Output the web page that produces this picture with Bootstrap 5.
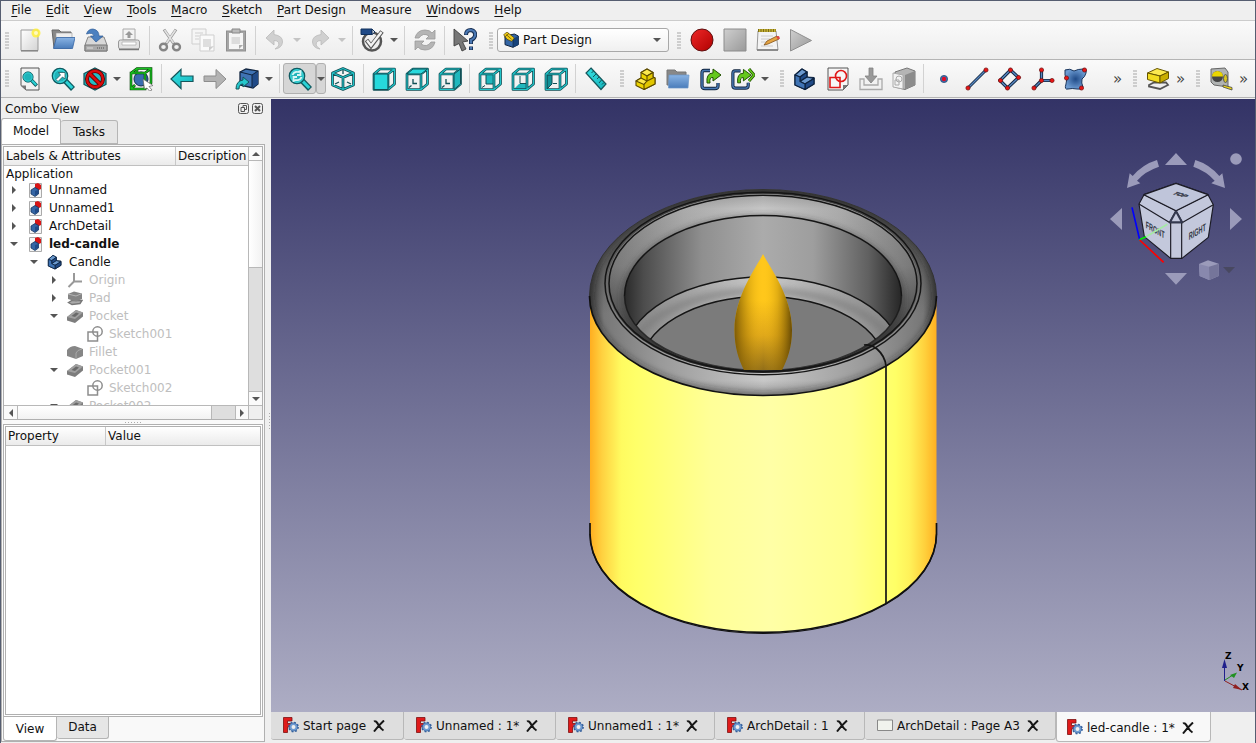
<!DOCTYPE html>
<html lang="en">
<head>
<meta charset="utf-8">
<title>FreeCAD</title>
<meta name="viewport" content="width=device-width, initial-scale=1">
<link href="https://cdn.jsdelivr.net/npm/bootstrap@5.3.0/dist/css/bootstrap.min.css" rel="stylesheet">
<script src="https://cdn.jsdelivr.net/npm/bootstrap@5.3.0/dist/js/bootstrap.bundle.min.js"></script>
<style>
body{font:12px/18px "DejaVu Sans",sans-serif;color:#111;background:#efefef;overflow:hidden}
.win{width:1256px;height:743px;border:1px solid #555d70;border-bottom:0;background:#efefef}
.menu{height:20px;border-bottom:1px solid #ccc;padding-left:3px}
.menu span{padding:0 7.3px;line-height:19px}
.menu u{text-underline-offset:2px;text-decoration-thickness:1px}
.bar{background:linear-gradient(#fafafa,#ededed);border-bottom:1px solid #b4b4b4}
.bar1{height:39px}.bar2{height:38px;margin-bottom:1px}
.tb{width:33px;flex:none;display:flex;align-items:center;justify-content:center}
.tb svg,.td svg.ic{width:24px;height:24px}
.td{width:45px;flex:none;display:flex;align-items:center}
.td svg.ic{margin:0 3px 0 3.5px;flex:none}
.arr{width:0;height:0;border:4px solid transparent;border-top:4.5px solid #555;border-bottom:0;flex:none}
.td .arr{margin-left:3px}
.off .arr{border-top-color:#c4c4c4}
.sp{width:8px;height:29px;flex:none;border-left:1px solid #d2d2d2;margin-left:4px;margin-right:-4px}
.sp7{margin-left:3px}
.grip{width:4px;height:17px;flex:none;background:radial-gradient(circle at 1px 1px,#c0c0c0 .6px,transparent 1px) 0 0/2px 3px}
.more{font-size:15px;color:#444;line-height:34px;width:12px;flex:none;margin-left:2px}
.combo{width:172px;height:24px;border:1px solid #a8a8a8;border-radius:3px;background:linear-gradient(#fff,#f0f0f0);padding:0 7px 0 5px;flex:none}
.on{height:31px;background:#d6d6d6;border:1px solid #b0b0b0;border-radius:3px}
.dock{width:266px;flex:none}
.dtitle{height:19px;padding:0 0 0 4px}
.tabx{border:1px solid #b5b5b5;border-radius:3px 3px 0 0;text-align:center}
.pane{border:1px solid #b0b0b0;background:#f9f9f9;width:264px;height:598px;padding:1px}
.box{border:1px solid #b0b0b0;background:#fff}
.hd{height:19px;background:linear-gradient(#fff,#ebebeb);border-bottom:1px solid #c0c0c0}
.tree{width:244px;height:258px;overflow:hidden}
.tr{height:18px;display:flex;align-items:center;white-space:nowrap;flex:none}
.tr svg{width:16px;height:16px;flex:none}
.tr0{height:15px;padding-left:2px}
.dis{color:#bebebe}
.tw{width:17px;flex:none;display:flex;align-items:center}
.tw i{margin-left:0;border:4px solid transparent}
.tw .c{border-left:4px solid #555;border-right:0;margin-left:2px}
.tw .o{border-top:4px solid #555;border-bottom:0}
.l0{padding-left:6px}.l1{padding-left:26px}.l2{padding-left:46px}.l3{padding-left:79px}
.tr b,.tr span{margin-left:6px}
.scr{background:#dedede}
.sbtn{background:#fafafa;display:flex;align-items:center;justify-content:center;flex:none}
.vs{width:14px;border-left:1px solid #b8b8b8}
.vs .sbtn{height:14px;border-bottom:1px solid #b8b8b8}
.hs{height:14px;border-top:1px solid #b8b8b8}
.hs .sbtn{width:14px;border-right:1px solid #b8b8b8}
.thumb{background:linear-gradient(90deg,#fff,#f2f2f2)}
.view{height:613px;display:block;width:984px}
.dt{height:28px;background:#dedede;border:1px solid #b8b8b8;border-left-width:0;border-radius:0 0 3px 3px;display:flex;align-items:center;padding-left:12px;flex:none}
.dt svg{width:16px;height:17px;flex:none}
.dt span{margin:0 7px 0 4px;white-space:nowrap}
.dt svg.x{width:12px;height:12px}
.dt.act{height:30px;background:#f8f8f8;border-top:0;border-left:1px solid #b8b8b8;padding-top:2px;padding-left:10px}
.w1{width:133px}.w2{width:152px}.w3{width:159px}.w4{width:150px}.w5{width:191px}.w6{width:155px}
</style>
</head>
<body>
<svg width="0" height="0" class="position-absolute">
<defs>
<linearGradient id="gy" x1="0" x2="1" y1="0" y2="1"><stop offset="0" stop-color="#fff"/><stop offset="1" stop-color="#d4d4d4"/></linearGradient>
<linearGradient id="gg" x1="0" x2="1" y1="0" y2="1"><stop offset="0" stop-color="#cfcfcf"/><stop offset="1" stop-color="#999"/></linearGradient>
<linearGradient id="gb" x1="0" x2="0" y1="0" y2="1"><stop offset="0" stop-color="#8ab4e4"/><stop offset="1" stop-color="#4a7cba"/></linearGradient>
<linearGradient id="gc" x1="0" x2="1" y1="0" y2="1"><stop offset="0" stop-color="#34e0e2"/><stop offset="1" stop-color="#16b5bd"/></linearGradient>
<linearGradient id="gr" x1="0" x2="1" y1="0" y2="1"><stop offset="0" stop-color="#ee2929"/><stop offset="1" stop-color="#b00000"/></linearGradient>
<radialGradient id="gs"><stop offset="0" stop-color="#204a87"/><stop offset="1" stop-color="#6c9bd2"/></radialGradient>
<symbol id="new" viewBox="0 0 24 24"><path d="M3 2H20V22.500H3Z" fill="url(#gy)" stroke="#999"/><path d="M3 23H20" stroke="#777"/><circle cx="18" cy="5" r="4.500" fill="#fff03c" opacity=".85"/><circle cx="18" cy="5" r="2" fill="#fffac0"/></symbol>
<symbol id="open" viewBox="0 0 24 24"><path d="M1 2H8L10 4H20V20H3Z" fill="#888" stroke="#666"/><path d="M5 5H21V10H5Z" fill="#eee" stroke="#999" stroke-width=".6"/><path d="M5.500 9.500H24L21.500 20.500H2.500Z" fill="url(#gb)" stroke="#3465a4" stroke-width=".8"/></symbol>
<symbol id="save" viewBox="0 0 24 24"><path d="M4 9H20L23 17V23H1V17Z" fill="#d8d8d8" stroke="#888"/><path d="M1 17H23V23H1Z" fill="#aaa" stroke="#777"/><path d="M3 20H9" stroke="#ddd"/><path d="M13 20H21" stroke="#555" stroke-dasharray="1 1"/><path d="M2.500 6Q4 1 9 1 15 2 15 8H19L12 14 6.500 8H10Q9 4 2.500 6Z" fill="#4b80c0" stroke="#2c5a96" stroke-width=".7"/></symbol>
<symbol id="print" viewBox="0 0 24 24"><path d="M6 1H18V12H6Z" fill="#f3f3f3" stroke="#aaa"/><path d="M12 3L16 7H13.500V10H10.500V7H8Z" fill="#999"/><rect x="1.500" y="12" width="21" height="9" rx="2" fill="#e2e2e2" stroke="#999"/><path d="M5 14H19V17H5Z" fill="#fff" stroke="#aaa" stroke-width=".7"/><path d="M2 21.500H22" stroke="#777" stroke-width="1.500"/></symbol>
<symbol id="cut" viewBox="0 0 24 24"><g fill="none"><path d="M8 16L18 1.500M16 16L6 1.500" stroke="#999" stroke-width="3"/><path d="M8.500 15L17.500 2M15.500 15L6.500 2" stroke="#e2e2e2" stroke-width="1.600"/><ellipse cx="5.500" cy="19" rx="3.500" ry="3.300" stroke="#858585" stroke-width="2.400"/><ellipse cx="18.500" cy="19" rx="3.500" ry="3.300" stroke="#858585" stroke-width="2.400"/></g></symbol>
<symbol id="copy" viewBox="0 0 24 24"><g fill="#f5f5f5" stroke="#cfcfcf"><path d="M1 1H15V16H1Z"/><path d="M9 7H23V23H9Z" fill="#fafafa"/></g><path d="M4 5H12M4 8H8M4 11H8" stroke="#dcdcdc" stroke-width="1.500"/><path d="M12 11H20V19H12Z" fill="#dedede"/><path d="M23 18L18 23V19Z" fill="#ccc"/></symbol>
<symbol id="paste" viewBox="0 0 24 24"><rect x="2.500" y="3" width="19" height="20" fill="#a5a5a5" stroke="#8f8f8f"/><path d="M5 5H19V21H5Z" fill="#f5f5f5"/><path d="M8 1H16V5H8Z" fill="#bbb" stroke="#888"/><path d="M7.500 9H16V16H7.500Z" fill="#dcdcdc"/><path d="M19 17L15 21V17Z" fill="#aaa"/></symbol>
<symbol id="undo" viewBox="0 0 24 24"><path d="M3 10L11 2V6.500Q20 8 19.500 14 19 20 12 21 17 18 15.500 14.500 14.500 12.500 11 12.500V17Z" fill="#d0d0d0" stroke="#bababa" stroke-width=".8"/></symbol>
<symbol id="redo" viewBox="0 0 24 24"><use href="#undo" width="24" height="24" transform="matrix(-1 0 0 1 24 0)"/></symbol>
<symbol id="check" viewBox="0 0 24 24"><circle cx="12" cy="13.500" r="9" fill="#eee" stroke="#555" stroke-width="2.500"/><path d="M1 1H12V6.500H1Z" fill="#204a87" stroke="#10305c"/><path d="M12 1L15 4 12 6.500Z" fill="#ddd" stroke="#10305c"/><path d="M6.500 12L11 18 22 3.500" fill="none" stroke="#555" stroke-width="4.300"/><path d="M7 12.500L11 17.500 21.500 4" fill="none" stroke="#f3f3f3" stroke-width="2.400"/></symbol>
<symbol id="refresh" viewBox="0 0 24 24"><path d="M2 10Q4 2 12 2 17 2 19 5L22 2V11H13L16 8Q10 4 6 10ZM22 14Q20 22 12 22 7 22 5 19L2 22V13H11L8 16Q14 20 18 14Z" fill="#b5b5b5" stroke="#999" stroke-width=".8"/></symbol>
<symbol id="help" viewBox="0 0 24 24"><path d="M13 7Q13 2 18 2 23 3 22 8 21 11 18 12V16M18 18.500V22" fill="none" stroke="#182f52" stroke-width="4"/><path d="M13 6.500Q13 2 18 2 23 3 22 8 21 11 18 12V15.500M18 19V21.500" fill="none" stroke="#4a78b4" stroke-width="2.200"/><path d="M1 1L15 13 9.500 14 13 21 9 23 6 15.500 1 18Z" fill="#777" stroke="#3e3e3e" stroke-width=".9"/></symbol>
<symbol id="pd" viewBox="0 0 24 24"><path d="M3 6L17 3 23 6V19L15 23 3 19Z" fill="#3465a4" stroke="#10243f" stroke-width="1.500"/><path d="M15 10L23 6V19L15 23Z" fill="#16427a"/><path d="M15 11V23" fill="none" stroke="#10243f"/><path d="M1 4L6 0 17 9 13 14 6 11Z" fill="#f0cc18" stroke="#4d3d00"/><path d="M5 4L13 11M2 8L9 2" stroke="#4d3d00"/></symbol>
<symbol id="rec" viewBox="0 0 24 24"><circle cx="12" cy="12" r="11" fill="url(#gr)" stroke="#5e1010"/></symbol>
<symbol id="stop" viewBox="0 0 24 24"><path d="M1 1H23V23H1Z" fill="url(#gg)" stroke="#8c8c8c"/></symbol>
<symbol id="macro" viewBox="0 0 24 24"><path d="M2 3H20L22 22H1Z" fill="#f3f3f3" stroke="#999"/><path d="M1 22H22" stroke="#777" stroke-width="1.500"/><path d="M2 2.500H20" stroke="#7c6b17" stroke-width="3"/><path d="M3 2.500H20" stroke="#c3b032" stroke-width="3" stroke-dasharray="1.500 1"/><path d="M5 8H17M5 11H14M5 14H11M5 18H17" stroke="#ccc"/><path d="M8 17L11 13 21 8 23 11 12 16Z" fill="#e5a442" stroke="#805018" stroke-width=".8"/><path d="M20 8.500L23 8 24 10.500 22 11.500Z" fill="#d44"/></symbol>
<symbol id="play" viewBox="0 0 24 24"><path d="M1.500 1.500L22.500 12.500 1.500 23Z" fill="url(#gg)" stroke="#909090"/></symbol>
<symbol id="mag" viewBox="0 0 24 24"><path d="M13.500 13L22 22" stroke="#105b61" stroke-width="5.500"/><path d="M14 13.500L21.300 21" stroke="#2bd3d7" stroke-width="3"/><circle cx="9" cy="9" r="7.700" fill="#1fb3b9" stroke="#105b61" stroke-width="1.300"/><circle cx="9" cy="9" r="6.200" fill="none" stroke="#43e0e3"/></symbol>
<symbol id="fitall" viewBox="0 0 24 24"><path d="M3 1H21V23H8L3 18.500Z" fill="#f2f2f2" stroke="#555"/><path d="M3 18.500H8V23Z" fill="#777"/><use href="#mag" x="4" y="4" width="16" height="16"/></symbol>
<symbol id="fitsel" viewBox="0 0 24 24"><use href="#mag" width="24" height="24"/><path d="M5 12.500L9.500 8 7.500 5.500H14V12L11.500 10 7 14.500Z" fill="#fff" stroke="#174d51" stroke-width=".7"/></symbol>
<symbol id="sync" viewBox="0 0 24 24"><use href="#mag" width="24" height="24"/><path d="M4.500 8Q6 4 10 5L12.500 4V8H9M13.500 10Q12 14 8 13L5.500 14V10H9" fill="none" stroke="#d8f6f6" stroke-width="1.800"/></symbol>
<symbol id="draw" viewBox="0 0 24 24"><path d="M12 1L23 6.500V17.500L12 23 1 17.500V6.500Z" fill="#22bec5" stroke="#124f55" stroke-width="1.200"/><g fill="none"><circle cx="12" cy="12" r="8" stroke="#590000" stroke-width="4"/><path d="M6.500 6.500L17.500 17.500" stroke="#590000" stroke-width="4.500"/><circle cx="12" cy="12" r="8" stroke="#d80d0d" stroke-width="2.300"/><path d="M6.500 6.500L17.500 17.500" stroke="#d80d0d" stroke-width="2.700"/></g></symbol>
<symbol id="bbox" viewBox="0 0 24 24"><circle cx="12" cy="12" r="7" fill="#3a6cb0" stroke="#142c50"/><g fill="none" stroke="#073f08" stroke-width="2.600"><path d="M2 6H16V22H2ZM2 6L8 1.500H22V16L16 22M16 6L22 1.500M8 1.500V5M2 22L6 18"/></g><g fill="none" stroke="#18c020" stroke-width="1.400"><path d="M2 6H16V22H2ZM2 6L8 1.500H22V16L16 22M16 6L22 1.500M8 1.500V5M2 22L6 18"/></g><path d="M14 12L24 18.500 20 19.500 23 23 20.500 24 18 21 15.500 22Z" fill="#fff" stroke="#666" stroke-width=".7"/></symbol>
<symbol id="back" viewBox="0 0 24 24"><path d="M1 12L11 2.500V9H23V14.500H11V21.500Z" fill="url(#gc)" stroke="#15565b" stroke-width="1.200"/></symbol>
<symbol id="fwd" viewBox="0 0 24 24"><path d="M23 12L13 2.500V9H1V14.500H13V21.500Z" fill="#b3b3b3" stroke="#8d8d8d"/></symbol>
<symbol id="link" viewBox="0 0 24 24"><path d="M5 5L11 2 23 4V17L18 21 5 18Z" fill="#3f73b4" stroke="#10243f" stroke-width="1.300"/><path d="M17 8L23 4V17L17 21Z" fill="#204a87"/><path d="M5 5L17 8 23 4M17 8V20" fill="none" stroke="#10243f"/><path d="M1 22Q1 14 8 13V10L14 15 8 20V17Q4 17 4 22Z" fill="#25c7cc" stroke="#15565b"/></symbol>
<path id="wire" d="M2 7H16V22.500H2ZM2 7L8 2H22.500V17L16 22.500M16 7L22.500 2" fill="none" stroke-linejoin="round"/>
<path id="hid" d="M8 12V16.500H12M6.500 18.500L4 20.500" fill="none" stroke="#124f55" stroke-width="1.300"/>
<g id="cage"><use href="#wire" stroke="#124f55" stroke-width="2.700"/><use href="#wire" stroke="#20c4c9" stroke-width="1.100"/></g>
<symbol id="vfront" viewBox="0 0 24 24"><use href="#cage"/><path d="M2 7H16V22.500H2Z" fill="#27d9dc" stroke="#124f55" stroke-width="1.200"/></symbol>
<symbol id="vtop" viewBox="0 0 24 24"><use href="#hid"/><use href="#cage"/><path d="M2 7L8 2H22.500L16 7Z" fill="#27d9dc" stroke="#124f55"/></symbol>
<symbol id="vright" viewBox="0 0 24 24"><use href="#hid"/><use href="#cage"/><path d="M16 7L22.500 2V17L16 22.500Z" fill="#20b7bd" stroke="#124f55"/></symbol>
<symbol id="vrear" viewBox="0 0 24 24"><path d="M8 7H16V17H8Z" fill="#20b7bd" stroke="#124f55"/><path d="M7 18.500L4 20.500" stroke="#124f55"/><use href="#cage"/></symbol>
<symbol id="vbottom" viewBox="0 0 24 24"><path d="M3 22L8 17H16V22Z" fill="#20b7bd"/><path d="M9 9V16.500H15" fill="none" stroke="#124f55"/><use href="#cage"/></symbol>
<symbol id="vleft" viewBox="0 0 24 24"><path d="M3 8H8V17L3 22Z" fill="#128f96" stroke="#124f55"/><path d="M9 16.500H13" stroke="#124f55"/><use href="#cage"/></symbol>
<path id="isow" d="M12 1.500L22.500 6V18L12 22.500 1.500 18V6ZM1.500 6L12 10.500 22.500 6M12 10.500V22.500" fill="none" stroke-linejoin="round"/>
<symbol id="iso" viewBox="0 0 24 24"><path d="M12 3V7M4 17L8 15M20 17L16 15" stroke="#124f55" stroke-width="1.300"/><use href="#isow" stroke="#124f55" stroke-width="2.700"/><use href="#isow" stroke="#20c4c9" stroke-width="1.100"/></symbol>
<symbol id="ruler" viewBox="0 0 24 24"><path d="M7 1L22 17 17 22.500 2 6Z" fill="url(#gc)" stroke="#15565b" stroke-width="1.200"/><path d="M9.500 4L7.500 6M12 7L9 10M15 10L13 12M17.500 13L15 16M20 15.500L18 17.500" stroke="#15565b"/></symbol>
<symbol id="body" viewBox="0 0 24 24"><g stroke="#0d2340" stroke-width="1.200" stroke-linejoin="round"><path d="M2 8L9 2 14 5V10L21 10.500V17L12 22.500 2 18Z" fill="#3465a4"/><path d="M2 8L9 2 14 5 7 10Z" fill="#6c9acf"/><path d="M7 10L14 5V10L7 14.500Z" fill="#204a87"/><path d="M7 14.500L14 10 21 11.500 12 17Z" fill="#6c9acf"/><path d="M12 17L21 11.500V17L12 22.500Z" fill="#204a87"/><path d="M2 8L7 10V14.500L12 17V22.500L2 18Z" fill="#3f73b4"/></g></symbol>
<symbol id="part" viewBox="0 0 24 24"><g stroke="#5b4a00" stroke-width="1.100" stroke-linejoin="round"><path d="M3 14L8 11V5.500L14 2 20 5.500V10L22 11V17L11 22.500 3 18.500Z" fill="#edd400"/><path d="M8 5.500L14 2 20 5.500 14 9Z" fill="#fce94f"/><path d="M3 14L8 11 14 14 11 17.500Z" fill="#fce94f"/><path d="M14 14V9L20 5.500V10L22 11V17L11 22.500V17.500Z" fill="#e2c700"/><path d="M14 14L21 10.500" fill="none"/></g></symbol>
<symbol id="folder" viewBox="0 0 24 24"><path d="M1 3H9L11 5H20V18H1Z" fill="#888" stroke="#777"/><path d="M3 8H23L22 21H2.500Z" fill="url(#gb)" stroke="#6b96c8" stroke-width=".7"/></symbol>
<symbol id="lnk" viewBox="0 0 24 24"><path d="M11 3.500H5Q3 3.500 3 6V19Q3 21.500 6 21.500H16Q19 21.500 19 19V16" fill="none" stroke="#10243f" stroke-width="3.300"/><path d="M11 3.500H5Q3 3.500 3 6V19Q3 21.500 6 21.500H16Q19 21.500 19 19V16" fill="none" stroke="#4777b2" stroke-width="1.500"/><path d="M8 16Q7 6 14 6V2L22 8 14 14V10.500Q10 10 11 16Z" fill="#65c81c" stroke="#205000"/></symbol>
<symbol id="lnks" viewBox="0 0 24 24"><use href="#lnk" x="-1" width="23" height="24"/><path d="M18 2L23 8 18 14" fill="none" stroke="#205000" stroke-width="3"/><path d="M18 2L23 8 18 14" fill="none" stroke="#65c81c" stroke-width="1.600"/></symbol>
<symbol id="sketch" viewBox="0 0 24 24"><path d="M2 1H22V18L17 23H2Z" fill="#f6f6f6" stroke="#555"/><path d="M17 23V18H22Z" fill="#777"/><g fill="none" stroke="#e01818" stroke-width="1.600"><path d="M4 10.500H14V20.500H4Z"/><circle cx="15" cy="9" r="5.500"/></g></symbol>
<symbol id="map" viewBox="0 0 24 24"><path d="M1 12H5V18H19V12H23V22.500H1Z" fill="#f1f1f1" stroke="#aaa" stroke-width="1.300"/><path d="M10 1H14V9H18L12 16 6 9H10Z" fill="#999" stroke="#808080" stroke-width=".8"/></symbol>
<symbol id="sub" viewBox="0 0 24 24"><path d="M3 5L15 1 23 4V18L13 22.500 3 20Z" fill="#b5b5b5" stroke="#777"/><path d="M13 8L23 4V18L13 22.500Z" fill="#8c8c8c"/><path d="M1 6L11 8V22L1 20Z" fill="#f2f2f2" stroke="#aaa"/><circle cx="7" cy="12" r="3" fill="none" stroke="#aaa"/><path d="M3 13H7V18H3Z" fill="none" stroke="#aaa"/></symbol>
<g id="dot"><circle r="2.100" fill="#e81515" stroke="#6b1010" stroke-width=".7"/></g>
<symbol id="pt" viewBox="0 0 24 24"><circle cx="12" cy="12" r="3.600" fill="#3d6fae" stroke="#284b78" stroke-width=".8"/><circle cx="12" cy="12" r="2.200" fill="#e00c24"/></symbol>
<symbol id="line" viewBox="0 0 24 24"><path d="M3 21L21 3" stroke="#10243f" stroke-width="3"/><path d="M3 21L21 3" stroke="#5686c0" stroke-width="1.300"/><use href="#dot" x="3" y="21"/><use href="#dot" x="21" y="3"/></symbol>
<symbol id="plane" viewBox="0 0 24 24"><path d="M2 13.500L12.500 3 20.500 10.500 9.500 21Z" fill="none" stroke="#10243f" stroke-width="3.200"/><path d="M2 13.500L12.500 3 20.500 10.500 9.500 21Z" fill="none" stroke="#5686c0" stroke-width="1.400"/><use href="#dot" x="2.500" y="13.500"/><use href="#dot" x="12.500" y="3"/><use href="#dot" x="20.500" y="10.500"/><use href="#dot" x="9.500" y="21"/></symbol>
<symbol id="cs" viewBox="0 0 24 24"><path d="M10.500 3V13.500H21M10.500 13.500L3 21" fill="none" stroke="#10243f" stroke-width="3.200"/><path d="M10.500 3V13.500H21M10.500 13.500L3 21" fill="none" stroke="#5686c0" stroke-width="1.400"/><use href="#dot" x="10.500" y="3"/><use href="#dot" x="10.500" y="13.500"/><use href="#dot" x="21" y="13.500"/><use href="#dot" x="3" y="21"/></symbol>
<symbol id="shape" viewBox="0 0 24 24"><path d="M1 3Q6 1 10 4 14 2 19 2 23 1 22 6 21 10 18 12 17 16 19 20 18 23 13 22 8 21 4 22 0 23 2 17 4 12 1 8Z" fill="url(#gs)" stroke="#1a355c"/><use href="#dot" x="20.500" y="3"/><use href="#dot" x="2.500" y="11"/><use href="#dot" x="17.500" y="21"/></symbol>
<symbol id="padic" viewBox="0 0 24 24"><path d="M3 18L8 15.500H20L22 18 14 22 3 19.500Z" fill="#eee" stroke="#555" stroke-width="1.800"/><g stroke="#665500" stroke-linejoin="round"><path d="M1.500 6L11 1.500 22.500 5 14 9Z" fill="#fce94f"/><path d="M1.500 6L14 9V16L1.500 12.500Z" fill="#f2dc20"/><path d="M14 9L22.500 5V11.500L14 16Z" fill="#c9ad00"/></g></symbol>
<symbol id="tape" viewBox="0 0 24 24"><path d="M2 2L16 1 19 5V20L5 18 2 15Z" fill="#b0b3b3" stroke="#666"/><circle cx="8.500" cy="9.500" r="5.500" fill="#444"/><path d="M3 9.500A5.500 5.500 0 0 1 14 9.500Z" fill="#ead500"/><ellipse cx="16.500" cy="11.500" rx="2" ry="4" fill="#d8c520" stroke="#555"/><path d="M14 18L23 20.500V23L14 20Z" fill="#eed81a" stroke="#444" stroke-width=".8"/></symbol>
<symbol id="docic" viewBox="0 0 16 16"><path d="M2.500 1.500H14.500V15.500H2.500Z" fill="#f5f5f5" stroke="#aaa"/><path d="M8 2L11 1 14 3V7L10 9 8 6Z" fill="#d91515"/><path d="M4 8L8 5.500 11.500 7.500V12L8 14.500 4 12Z" fill="#3465a4" stroke="#18365f" stroke-width=".8"/><path d="M8 9L11.500 8V11.500L8 13.500Z" fill="#204a87"/></symbol>
<symbol id="oric" viewBox="0 0 16 16"><path d="M7 1V9.500H15M7 9.500L1.500 15" fill="none" stroke="#999" stroke-width="2"/></symbol>
<symbol id="padg" viewBox="0 0 16 16"><path d="M1.500 12.500L5 10.500H15L13 13.500 5 14.500Z" fill="#aaa" stroke="#777" stroke-width="1.400"/><path d="M1 4L7 1.500 15 3.500V9L9 11.500 1 9Z" fill="#858585"/><path d="M1 4L9 6 15 3.500" fill="none" stroke="#b5b5b5"/></symbol>
<symbol id="pocg" viewBox="0 0 16 16"><path d="M0 9L9 2 16 4.500V8.500L8 15 0 12.500Z" fill="#7d7d7d"/><path d="M0 9L9 2 16 4.500 8 11Z" fill="#a0a0a0"/><path d="M4.500 8L9 4.500 12 5.500 8 9Z" fill="#6a6a6a"/></symbol>
<symbol id="filg" viewBox="0 0 16 16"><path d="M0 6Q3 2 8 2L16 5V12L9 15 0 12Z" fill="#868686"/><path d="M9 15V9Q10 6 15 5" fill="none" stroke="#a9a9a9"/></symbol>
<symbol id="skg" viewBox="0 0 16 16"><g fill="none" stroke="#8d8d8d" stroke-width="1.500"><path d="M1 6H10.500V15H1Z"/><circle cx="10.500" cy="5.500" r="4.700"/></g></symbol>
<symbol id="fc" viewBox="0 0 16 17"><path d="M.5.500H9V4H4.500V6.500H7.500V10H4.500V15.500H.5Z" fill="#e01b1b" stroke="#7c1010" stroke-width=".8"/><circle cx="10.500" cy="10" r="4.500" fill="none" stroke="#35609c" stroke-width="1.800" stroke-dasharray="1.767 1.767"/><circle cx="10.500" cy="10" r="2.900" fill="none" stroke="#35609c" stroke-width="3"/><circle cx="10.500" cy="10" r="2.900" fill="#eee" stroke="#6d9ad0" stroke-width="1.800"/></symbol>
<symbol id="xx" viewBox="0 0 12 12"><path d="M1 1.500Q3 0 5.500 5 8 9 10.500 10.500M11 .5Q6 5 1 11.500" fill="none" stroke="#161616" stroke-width="2"/></symbol>
</defs>
</svg>

<div class="win d-flex flex-column">
<nav class="menu d-flex flex-shrink-0"><span><u>F</u>ile</span><span><u>E</u>dit</span><span><u>V</u>iew</span><span><u>T</u>ools</span><span><u>M</u>acro</span><span><u>S</u>ketch</span><span><u>P</u>art Design</span><span>Measure</span><span><u>W</u>indows</span><span><u>H</u>elp</span></nav>

<div class="bar bar1 d-flex align-items-center flex-shrink-0">
<i class="grip ms-1 me-1"></i>
<span class="tb"><svg><use href="#new"/></svg></span><span class="tb"><svg><use href="#open"/></svg></span><span class="tb"><svg><use href="#save"/></svg></span><span class="tb"><svg><use href="#print"/></svg></span>
<i class="sp"></i>
<span class="tb"><svg><use href="#cut"/></svg></span><span class="tb"><svg><use href="#copy"/></svg></span><span class="tb"><svg><use href="#paste"/></svg></span>
<i class="sp sp7"></i>
<span class="td off"><svg class="ic"><use href="#undo"/></svg><i class="arr"></i></span><span class="td off"><svg class="ic"><use href="#redo"/></svg><i class="arr"></i></span>
<i class="sp sp7"></i>
<span class="td"><svg class="ic"><use href="#check"/></svg><i class="arr"></i></span>
<i class="sp sp7"></i>
<span class="tb"><svg><use href="#refresh"/></svg></span>
<i class="sp sp7"></i>
<span class="tb"><svg><use href="#help"/></svg></span>
<i class="grip ms-2 me-1"></i>
<div class="combo d-flex align-items-center"><svg width="16" height="16"><use href="#pd"/></svg><span class="ms-1 flex-grow-1">Part Design</span><i class="arr"></i></div>
<i class="grip ms-2 me-1"></i>
<span class="tb"><svg><use href="#rec"/></svg></span><span class="tb"><svg><use href="#stop"/></svg></span><span class="tb"><svg><use href="#macro"/></svg></span><span class="tb"><svg><use href="#play"/></svg></span>
</div>

<div class="bar bar2 d-flex align-items-center flex-shrink-0">
<i class="grip ms-1 me-1"></i>
<span class="tb"><svg><use href="#fitall"/></svg></span><span class="tb"><svg><use href="#fitsel"/></svg></span><span class="td"><svg class="ic"><use href="#draw"/></svg><i class="arr"></i></span><span class="tb"><svg><use href="#bbox"/></svg></span>
<i class="sp"></i>
<span class="tb"><svg><use href="#back"/></svg></span><span class="tb"><svg><use href="#fwd"/></svg></span><span class="td"><svg class="ic"><use href="#link"/></svg><i class="arr"></i></span>
<i class="sp sp7"></i>
<span class="tb on"><svg><use href="#sync"/></svg></span><span class="on d-flex align-items-center"><i class="arr"></i></span>
<span class="tb"><svg><use href="#iso"/></svg></span>
<i class="sp"></i>
<span class="tb"><svg><use href="#vfront"/></svg></span><span class="tb"><svg><use href="#vtop"/></svg></span><span class="tb"><svg><use href="#vright"/></svg></span>
<i class="sp sp7"></i>
<span class="tb"><svg><use href="#vrear"/></svg></span><span class="tb"><svg><use href="#vbottom"/></svg></span><span class="tb"><svg><use href="#vleft"/></svg></span>
<i class="sp sp7"></i>
<span class="tb"><svg><use href="#ruler"/></svg></span>
<i class="grip ms-2 me-1"></i>
<span class="tb"><svg><use href="#part"/></svg></span><span class="tb"><svg><use href="#folder"/></svg></span><span class="tb"><svg><use href="#lnk"/></svg></span><span class="td"><svg class="ic"><use href="#lnks"/></svg><i class="arr"></i></span>
<i class="grip ms-2 me-1"></i>
<span class="tb"><svg><use href="#body"/></svg></span><span class="tb"><svg><use href="#sketch"/></svg></span><span class="tb"><svg><use href="#map"/></svg></span><span class="tb"><svg><use href="#sub"/></svg></span>
<i class="sp sp7"></i>
<span class="tb"><svg><use href="#pt"/></svg></span><span class="tb"><svg><use href="#line"/></svg></span><span class="tb"><svg><use href="#plane"/></svg></span><span class="tb"><svg><use href="#cs"/></svg></span><span class="tb"><svg><use href="#shape"/></svg></span>
<span class="more ms-auto">»</span><i class="grip ms-2"></i><span class="tb ms-1"><svg><use href="#padic"/></svg></span><span class="more">»</span><i class="grip ms-2"></i><span class="tb ms-1"><svg><use href="#tape"/></svg></span><span class="more me-1">»</span>
</div>

<div class="d-flex flex-grow-1">
<aside class="dock d-flex flex-column">
<div class="dtitle d-flex align-items-center"><span class="flex-grow-1">Combo View</span>
<svg width="26" height="12" class="me-1" fill="none" stroke="#555"><rect x="1.500" y=".5" width="10" height="10" rx="2"/><path d="M4 4.500H7.500V8.500H4ZM6 4V2.500H9.500V6.500H8"/><rect x="15.500" y=".5" width="10" height="10" rx="2"/><path d="M18 3L23 8M23 3L18 8" stroke-width="2"/></svg></div>
<div class="d-flex align-items-end" style="height:26px"><div class="tabx bg-white border-bottom-0 ms-0" style="width:60px;height:26px;line-height:25px">Model</div><div class="tabx border-start-0" style="width:57px;height:24px;line-height:23px;background:#e6e6e6">Tasks</div></div>
<div class="pane d-flex flex-column">
<div class="box d-flex flex-column flex-shrink-0" style="height:274px">
<div class="d-flex" style="height:258px">
<div class="tree">
<div class="hd d-flex"><span style="width:172px;padding-left:2px;border-right:1px solid #c8c8c8">Labels &amp; Attributes</span><span style="padding-left:2px">Description</span></div>
<div class="tr tr0">Application</div>
<div class="tr l0"><span class="tw m-0"><i class="c"></i></span><svg><use href="#docic"/></svg><span>Unnamed</span></div>
<div class="tr l0"><span class="tw m-0"><i class="c"></i></span><svg><use href="#docic"/></svg><span>Unnamed1</span></div>
<div class="tr l0"><span class="tw m-0"><i class="c"></i></span><svg><use href="#docic"/></svg><span>ArchDetail</span></div>
<div class="tr l0"><span class="tw m-0"><i class="o"></i></span><svg><use href="#docic"/></svg><b>led-candle</b></div>
<div class="tr l1"><span class="tw m-0"><i class="o"></i></span><svg><use href="#body"/></svg><span>Candle</span></div>
<div class="tr l2 dis"><span class="tw m-0"><i class="c"></i></span><svg><use href="#oric"/></svg><span>Origin</span></div>
<div class="tr l2 dis"><span class="tw m-0"><i class="c"></i></span><svg><use href="#padg"/></svg><span>Pad</span></div>
<div class="tr l2 dis"><span class="tw m-0"><i class="o"></i></span><svg><use href="#pocg"/></svg><span>Pocket</span></div>
<div class="tr l3 dis"><svg class="ms-1"><use href="#skg"/></svg><span>Sketch001</span></div>
<div class="tr l2 dis"><span class="tw m-0"></span><svg><use href="#filg"/></svg><span>Fillet</span></div>
<div class="tr l2 dis"><span class="tw m-0"><i class="o"></i></span><svg><use href="#pocg"/></svg><span>Pocket001</span></div>
<div class="tr l3 dis"><svg class="ms-1"><use href="#skg"/></svg><span>Sketch002</span></div>
<div class="tr l2 dis"><span class="tw m-0"><i class="o"></i></span><svg><use href="#pocg"/></svg><span>Pocket002</span></div>
</div>
<div class="vs scr d-flex flex-column"><div class="sbtn"><svg width="8" height="4"><path d="M0 4L4 0 8 4Z" fill="#555"/></svg></div><div class="thumb" style="height:107px;border-bottom:1px solid #b8b8b8"></div><div class="sbtn mt-auto border-bottom-0" style="border-top:1px solid #b8b8b8"><svg width="8" height="4"><path d="M0 0L4 4 8 0Z" fill="#555"/></svg></div></div>
</div>
<div class="hs scr d-flex"><div class="sbtn"><svg width="4" height="8"><path d="M4 0L0 4 4 8Z" fill="#555"/></svg></div><div style="width:194px;background:linear-gradient(#fff,#f2f2f2);border-right:1px solid #b8b8b8"></div><div class="sbtn ms-auto" style="border-left:1px solid #b8b8b8"><svg width="4" height="8"><path d="M0 0L4 4 0 8Z" fill="#555"/></svg></div><div style="width:13px;background:#efefef"></div></div>
</div>
<div class="d-flex justify-content-center align-items-center flex-shrink-0" style="height:4px"><svg width="17" height="1"><path d="M0 .5H17" stroke="#aaa" stroke-dasharray="1 2"/></svg></div>
<div class="box flex-shrink-0" style="height:293px;padding:1px"><div class="box h-100"><div class="hd d-flex"><span style="width:100px;padding-left:2px;border-right:1px solid #c8c8c8">Property</span><span style="padding-left:2px">Value</span></div></div></div>
<div class="d-flex flex-shrink-0"><div class="tabx bg-white border-top-0" style="width:54px;height:24px;line-height:24px;border-radius:0 0 3px 3px">View</div><div class="tabx border-start-0 border-top-0" style="width:52px;height:22px;line-height:21px;background:#e6e6e6;border-radius:0 0 3px 3px">Data</div></div>
</div>
</aside>
<div class="d-flex align-items-center justify-content-center flex-shrink-0" style="width:4px"><svg width="1" height="17"><path d="M.5 0V17" stroke="#aaa" stroke-dasharray="1 2"/></svg></div>
<main>
<svg class="view" viewBox="271 99 984 613">
<defs>
<linearGradient id="bg" x1="0" x2="0" y1="0" y2="1"><stop offset="0" stop-color="#333366"/><stop offset="1" stop-color="#adadc4"/></linearGradient>
<linearGradient id="yel" gradientUnits="userSpaceOnUse" x1="590" x2="937"><stop offset="0" stop-color="#ffae20"/><stop offset=".035" stop-color="#ffd140"/><stop offset=".09" stop-color="#fffb60"/><stop offset=".13" stop-color="#ffff68"/><stop offset=".35" stop-color="#ffff98"/><stop offset=".52" stop-color="#ffffa6"/><stop offset=".75" stop-color="#ffff8e"/><stop offset=".88" stop-color="#ffff66"/><stop offset=".92" stop-color="#fff25a"/><stop offset=".965" stop-color="#ffd03c"/><stop offset="1" stop-color="#ffae20"/></linearGradient>
<linearGradient id="rimx" gradientUnits="userSpaceOnUse" x1="590" x2="937"><stop offset="0" stop-color="#3d3d3d"/><stop offset=".04" stop-color="#777"/><stop offset=".2" stop-color="#999"/><stop offset=".5" stop-color="#c8c8c8"/><stop offset=".8" stop-color="#999"/><stop offset=".96" stop-color="#777"/><stop offset="1" stop-color="#3d3d3d"/></linearGradient>
<linearGradient id="shade" gradientUnits="userSpaceOnUse" x1="0" x2="0" y1="189" y2="397"><stop offset="0" stop-color="#222" stop-opacity=".85"/><stop offset=".35" stop-color="#222" stop-opacity=".35"/><stop offset=".6" stop-color="#444" stop-opacity="0"/><stop offset=".92" stop-color="#444" stop-opacity="0"/><stop offset="1" stop-color="#333" stop-opacity=".35"/></linearGradient>
<linearGradient id="inx" gradientUnits="userSpaceOnUse" x1="605" x2="921"><stop offset="0" stop-color="#7a7a7a"/><stop offset=".25" stop-color="#aaa"/><stop offset=".5" stop-color="#c6c6c6"/><stop offset=".75" stop-color="#aaa"/><stop offset="1" stop-color="#7a7a7a"/></linearGradient>
<linearGradient id="iny" gradientUnits="userSpaceOnUse" x1="0" x2="0" y1="194" y2="374"><stop offset="0" stop-color="#555" stop-opacity=".3"/><stop offset=".08" stop-color="#555" stop-opacity="0"/><stop offset=".4" stop-color="#444" stop-opacity=".1"/><stop offset=".75" stop-color="#333" stop-opacity=".8"/><stop offset="1" stop-color="#222"/></linearGradient>
<linearGradient id="wall" gradientUnits="userSpaceOnUse" x1="624" x2="902"><stop offset="0" stop-color="#292929"/><stop offset=".07" stop-color="#4c4c4c"/><stop offset=".28" stop-color="#8f8f8f"/><stop offset=".5" stop-color="#ababab"/><stop offset=".68" stop-color="#9e9e9e"/><stop offset=".88" stop-color="#606060"/><stop offset="1" stop-color="#252525"/></linearGradient>
<linearGradient id="fil" gradientUnits="userSpaceOnUse" x1="636" x2="890"><stop offset="0" stop-color="#888"/><stop offset=".5" stop-color="#cacaca"/><stop offset="1" stop-color="#888"/></linearGradient>
<linearGradient id="fx" x1="0" x2="1"><stop offset="0" stop-color="#664800" stop-opacity=".8"/><stop offset=".25" stop-color="#9b7000" stop-opacity=".3"/><stop offset=".5" stop-color="#ffc818" stop-opacity="0"/><stop offset=".75" stop-color="#9b7000" stop-opacity=".3"/><stop offset="1" stop-color="#503800" stop-opacity=".85"/></linearGradient>
<linearGradient id="fy" x1="0" x2="0" y1="0" y2="1"><stop offset="0" stop-color="#ffc71b"/><stop offset=".4" stop-color="#ffc71b"/><stop offset=".7" stop-color="#e0a81a"/><stop offset="1" stop-color="#926e18"/></linearGradient>
<clipPath id="hole"><path d="M624.500 296A138.500 80.500 0 0 1 901.500 296A138.500 74.500 0 0 1 624.500 296Z"/></clipPath>
<filter id="soft" x="-10%" y="-10%" width="120%" height="120%"><feGaussianBlur stdDeviation="3"/></filter>
<clipPath id="ring"><ellipse cx="763" cy="283.500" rx="155.500" ry="89.500"/></clipPath>
<clipPath id="outer"><path d="M589.500 296A173.500 106.500 0 0 1 936.500 296A173.500 99.500 0 0 1 589.500 296Z"/></clipPath>
</defs>
<path d="M271 99H1255V712H271Z" fill="url(#bg)"/>
<path d="M590 296V534A173.250 98.500 0 0 0 936.500 534V296Z" fill="url(#yel)"/>
<path d="M590 523V534A173.250 98.500 0 0 0 936.500 534V523" fill="none" stroke="#111" stroke-width="1.700"/>
<path d="M590 534A173.250 99.500 0 0 0 936.500 534" fill="none" stroke="#111" stroke-width="1.200"/>
<path d="M589.500 296A173.500 106.500 0 0 1 936.500 296A173.500 99.500 0 0 1 589.500 296Z" fill="url(#rimx)"/>
<path d="M589.500 296A173.500 106.500 0 0 1 936.500 296A173.500 99.500 0 0 1 589.500 296Z" fill="url(#shade)"/>
<g clip-path="url(#outer)"><path d="M589.500 296A173.500 106.500 0 0 1 936.500 296A173.500 99.500 0 0 1 589.500 296Z" fill="none" stroke="#222" stroke-opacity=".5" stroke-width="5" filter="url(#soft)"/></g>
<path d="M589.500 296A173.500 106.500 0 0 1 936.500 296" fill="none" stroke="#333" stroke-width="1"/>
<path d="M589.500 296A173.500 99.500 0 0 0 936.500 296" fill="none" stroke="#111" stroke-width="1.700"/>
<ellipse cx="763" cy="283.500" rx="155.500" ry="89.500" fill="url(#inx)"/>
<ellipse cx="763" cy="283.500" rx="155.500" ry="89.500" fill="url(#iny)"/>
<g clip-path="url(#ring)"><path d="M624.500 296A138.500 80.500 0 0 1 901.500 296A138.500 74.500 0 0 1 624.500 296Z" fill="none" stroke="#333" stroke-opacity=".6" stroke-width="6" filter="url(#soft)" transform="translate(0 3)"/></g>
<g clip-path="url(#hole)">
<path d="M620 210H906V380H620Z" fill="url(#wall)"/>
<ellipse cx="763" cy="357.500" rx="138.500" ry="80.500" fill="url(#fil)"/>
<ellipse cx="763" cy="359" rx="133" ry="68" fill="none" stroke="#777" stroke-width="7" filter="url(#soft)" opacity=".6"/>
<g fill="none" stroke="#151515" stroke-width="1.500"><ellipse cx="763" cy="357.500" rx="138.500" ry="80.500"/><ellipse cx="763" cy="368" rx="123" ry="71.500" fill="#7b7b7b"/></g>
</g>
<g fill="none" stroke="#151515" stroke-width="1.500"><path d="M624.500 296A138.500 80.500 0 0 1 901.500 296"/><path d="M624.500 296A138.500 74.500 0 0 0 901.500 296" stroke-opacity=".75"/><ellipse cx="763" cy="283.500" rx="158" ry="91.300"/><ellipse cx="763" cy="283.500" rx="154" ry="88.300"/></g>
<path d="M763 254C770 268 792 296 792 330 792 348 787 360 782 370H744C739 360 734.500 348 734.500 330 734.500 296 756 268 763 254Z" fill="url(#fy)"/>
<path d="M763 254C770 268 792 296 792 330 792 348 787 360 782 370H744C739 360 734.500 348 734.500 330 734.500 296 756 268 763 254Z" fill="url(#fx)"/>
<path d="M864 345Q871 344 877 349 885 356 886 366V603" fill="none" stroke="#151515" stroke-width="1.700"/>
<g transform="translate(1100 140) scale(.33333)">
<g fill="#9b9bba"><path d="M195 75L228 39 261 75ZM30 237L66 204V270ZM426 237L390 204V270ZM195 399H261L228 434Z"/><circle cx="408" cy="57" r="17.500"/><path d="M171 60L177 80Q135 94 111 122L121 130 81 144 89 100 98 108Q128 73 171 60ZM286 60L280 80Q320 94 344 122L334 130 375 144 367 100 358 108Q328 73 286 60Z"/></g>
<g stroke="#1c1c26" stroke-width="3.500" stroke-linejoin="round"><path d="M228 130L324 164 340 194 325 292 246 355H212L133 290 117 192 132 164Z" fill="#c3c8dc"/><path d="M132 164L228 212 324 164M117 192L210 248M340 194L246 248M228 212L208 248H248ZM212 248V355M245 248V355" fill="none"/><path d="M132 164L228 130 324 164 228 212Z" fill="#bfc5da"/><path d="M228 214L210 247H246Z" fill="none" stroke="#33384e" stroke-width="6"/></g>
<g font-family="Liberation Sans,sans-serif" font-weight="bold" fill="#333846" font-size="27"><text transform="matrix(.82 .48 0 1.100 137 263)" textLength="69" lengthAdjust="spacingAndGlyphs">FRONT</text><text transform="matrix(.82 -.48 0 1.150 266 301)" textLength="63" lengthAdjust="spacingAndGlyphs">RIGHT</text><text transform="matrix(.8 .25 -.8 .3 216 161)" textLength="46" lengthAdjust="spacingAndGlyphs" font-size="27" stroke="#333846" stroke-width="2">TOP</text></g>
<path d="M96 202L119 299" stroke="#00f" stroke-width="5"/><path d="M118 299L138 290" stroke="#0e0" stroke-width="5"/><path d="M138 290L202 253" stroke="#a4eaa4" stroke-width="5"/><path d="M119 300L191 367" stroke="#f00" stroke-width="5"/>
<path d="M297 372L324 361 356 371V408L328 420 299 408Z" fill="#9b9bba"/><path d="M297 372L327 380V420L299 408Z" fill="#8888ad"/><path d="M327 380L356 371V408L328 420Z" fill="#75759a"/><path d="M369 381H405L387 400Z" fill="#484860"/>
</g>
<g font-family="DejaVu Sans,sans-serif" font-weight="bold" font-size="9"><path d="M1224.500 681V662" stroke="#20208c"/><path d="M1224.500 659L1227 668H1222Z" fill="#20208c"/><path d="M1225 680L1233 675" stroke="#209020"/><path d="M1237 672.500L1234 678 1230 675Z" fill="#209020"/><path d="M1225 681L1242 690" stroke="#902020"/><path d="M1242 690L1233 688 1235 684Z" fill="#902020"/><text x="1225" y="659">Z</text><text x="1237" y="671">Y</text><text x="1242" y="690">X</text></g>
</svg>
<div class="d-flex" style="border-top:1px solid #b8b8b8;margin-top:-1px;height:31px">
<div class="dt w1 border-top-0"><svg><use href="#fc"/></svg><span>Start page</span><svg class="x"><use href="#xx"/></svg></div>
<div class="dt w2 border-top-0"><svg><use href="#fc"/></svg><span>Unnamed : 1*</span><svg class="x"><use href="#xx"/></svg></div>
<div class="dt w3 border-top-0"><svg><use href="#fc"/></svg><span>Unnamed1 : 1*</span><svg class="x"><use href="#xx"/></svg></div>
<div class="dt w4 border-top-0"><svg><use href="#fc"/></svg><span>ArchDetail : 1</span><svg class="x"><use href="#xx"/></svg></div>
<div class="dt w5 border-top-0"><svg viewBox="0 0 16 17"><path d="M.5 3H15.500V13.500H.5Z" fill="#f1f3ed" stroke="#888"/></svg><span>ArchDetail : Page A3</span><svg class="x"><use href="#xx"/></svg></div>
<div class="dt w6 act"><svg><use href="#fc"/></svg><span>led-candle : 1*</span><svg class="x"><use href="#xx"/></svg></div>
</div>
</main>
</div>
</div>
</body>
</html>
